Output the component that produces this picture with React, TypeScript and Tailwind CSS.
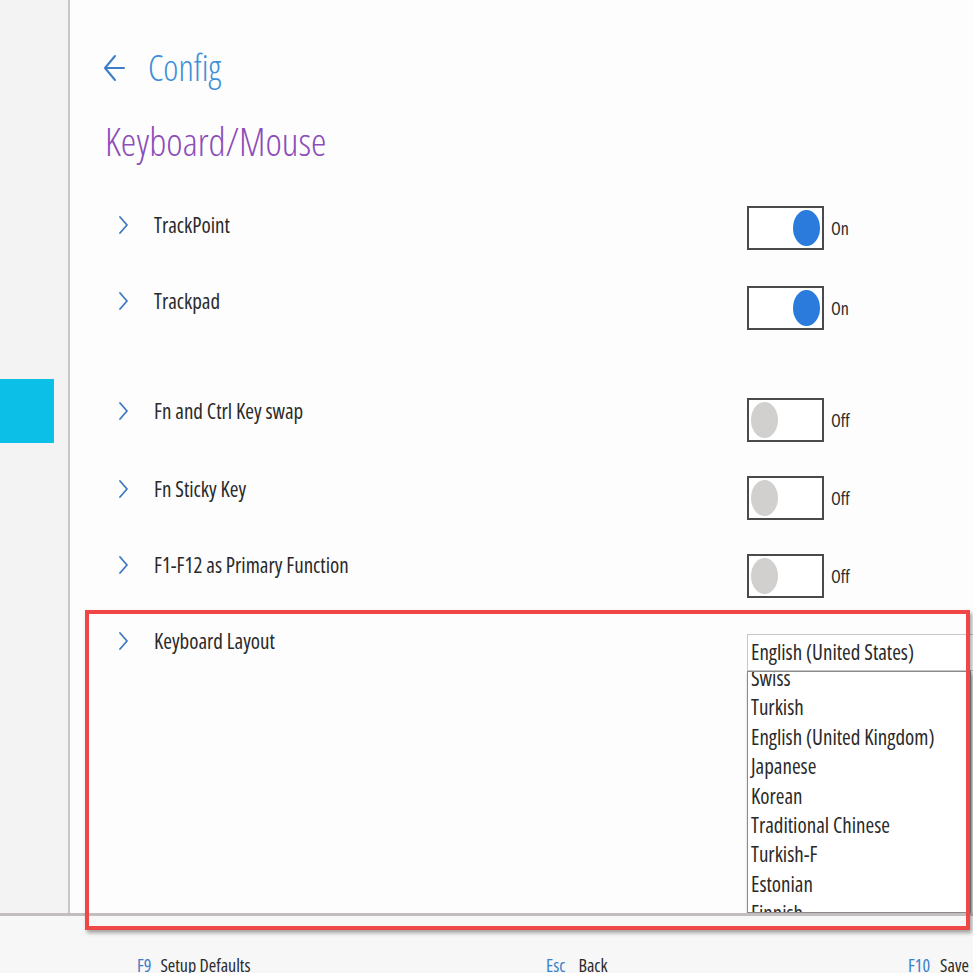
import React from "react";

const FONT = { fontFamily: '"Open Sans", "Noto Sans", Roboto, sans-serif' };

function Chevron() {
  return (
    <svg width="12" height="22" viewBox="0 0 12 22" className="shrink-0">
      <path d="M3 3 L10 11 L3 19" fill="none" stroke="#3b78c2" strokeWidth="1.8" strokeLinecap="round" strokeLinejoin="round" />
    </svg>
  );
}

function Toggle({ on }: { on: boolean }) {
  return (
    <div className="flex items-center gap-[7px] shrink-0">
      <div className={`w-[77px] h-[44px] border-2 border-[#4a4a4a] bg-white flex items-center px-[2px] ${on ? "justify-end" : "justify-start"}`}>
        <div className={`w-[27px] h-[36px] rounded-[50%] ${on ? "bg-[#2a7bdc]" : "bg-[#d2d0ce]"}`} />
      </div>
      <span className="text-[18px] text-[#2b2b2b] font-stretch-condensed">{on ? "On" : "Off"}</span>
    </div>
  );
}

function Row({
  label,
  children,
  className = "",
  labelClass = "",
}: {
  label: string;
  children: React.ReactNode;
  className?: string;
  labelClass?: string;
}) {
  return (
    <div className={`flex items-start ${className}`}>
      <div className={`w-[677px] shrink-0 flex items-center h-[30px] pl-[47px] ${labelClass}`}>
        <Chevron />
        <span className="ml-[25px] text-[21px] leading-[30px] text-[#2a2a2a] font-stretch-condensed">{label}</span>
      </div>
      {children}
    </div>
  );
}

const layouts = [
  "Swiss",
  "Turkish",
  "English (United Kingdom)",
  "Japanese",
  "Korean",
  "Traditional Chinese",
  "Turkish-F",
  "Estonian",
  "Finnish",
];

export default function App() {
  return (
    <div className="relative w-[973px] h-[973px] overflow-hidden flex flex-col bg-[#f7f7f7]" style={FONT}>
      <div className="flex h-[913px] shrink-0">
        <aside className="w-[70px] shrink-0 border-r-2 border-[#c9c5c5] bg-[#f3f3f3] pt-[379px]">
          <div className="w-[54px] h-[64px] bg-[#0cbfe6]" />
        </aside>
        <main className="flex-1 bg-[#fdfdfd] overflow-hidden pt-[48px]">
          <div className="flex items-center pl-[33px] h-[40px]">
            <svg width="22" height="28" viewBox="0 0 22 28">
              <path d="M12 2 L2 14 L12 26 M2 14 L21 14" fill="none" stroke="#3a7fc8" strokeWidth="2" strokeLinecap="round" strokeLinejoin="round" />
            </svg>
            <span className="ml-[23px] text-[36px] leading-[40px] font-light text-[#3d8fd6] font-stretch-condensed">Config</span>
          </div>
          <h1 className="pl-[35px] mt-[29px] text-[39px] leading-[48px] font-light text-[#8c4db9] font-stretch-condensed">Keyboard/Mouse</h1>

          <div className="mt-[41px] flex flex-col">
            <Row label="TrackPoint" labelClass="mt-[4px]">
              <Toggle on={true} />
            </Row>
            <Row label="Trackpad" className="mt-[36px]">
              <Toggle on={true} />
            </Row>
            <Row label="Fn and Ctrl Key swap" className="mt-[68px]" labelClass="-mt-[2px]">
              <Toggle on={false} />
            </Row>
            <Row label="Fn Sticky Key" className="mt-[34px]" labelClass="-mt-[2px]">
              <Toggle on={false} />
            </Row>
            <Row label="F1-F12 as Primary Function" className="mt-[34px]" labelClass="-mt-[4px]">
              <Toggle on={false} />
            </Row>
            <Row label="Keyboard Layout" className="mt-[36px]" labelClass="-mt-[8px]">
              <div className="flex flex-col shrink-0">
                <div className="w-[240px] h-[37px] border border-[#c6c6c6] bg-white pl-[3px] text-[21px] leading-[35px] text-[#2a2a2a] font-stretch-condensed">
                  English (United States)
                </div>
                <div className="w-[224px] h-[242px] border border-[#8a8a8a] bg-white overflow-hidden shadow-[1px_3px_3px_rgba(0,0,0,0.35)]">
                  <ul className="-mt-[8px] pl-[3px]">
                    {layouts.map((l) => (
                      <li key={l} className="text-[21px] leading-[29.4px] text-[#2a2a2a] font-stretch-condensed">{l}</li>
                    ))}
                  </ul>
                </div>
              </div>
            </Row>
          </div>
        </main>
      </div>
      <div className="h-[3px] shrink-0 bg-[#c2bebe]" />
      <footer className="flex-1 bg-[#f7f7f7] flex items-start pt-[39px] text-[18px] leading-[20px] font-stretch-condensed">
        <div className="w-[546px] shrink-0 pl-[137px] flex gap-[9px]">
          <span className="text-[#3a7fc8]">F9</span>
          <span className="text-[#2a2a2a]">Setup Defaults</span>
        </div>
        <div className="w-[362px] shrink-0 flex gap-[13px]">
          <span className="text-[#3a7fc8]">Esc</span>
          <span className="text-[#2a2a2a]">Back</span>
        </div>
        <div className="flex gap-[10px] shrink-0">
          <span className="text-[#3a7fc8]">F10</span>
          <span className="text-[#2a2a2a]">Save</span>
        </div>
      </footer>
      <div className="absolute left-[85px] top-[610px] w-[885px] h-[320px] border-4 border-[#f04646] shadow-[2px_3px_4px_rgba(0,0,0,0.35)]" />
    </div>
  );
}
